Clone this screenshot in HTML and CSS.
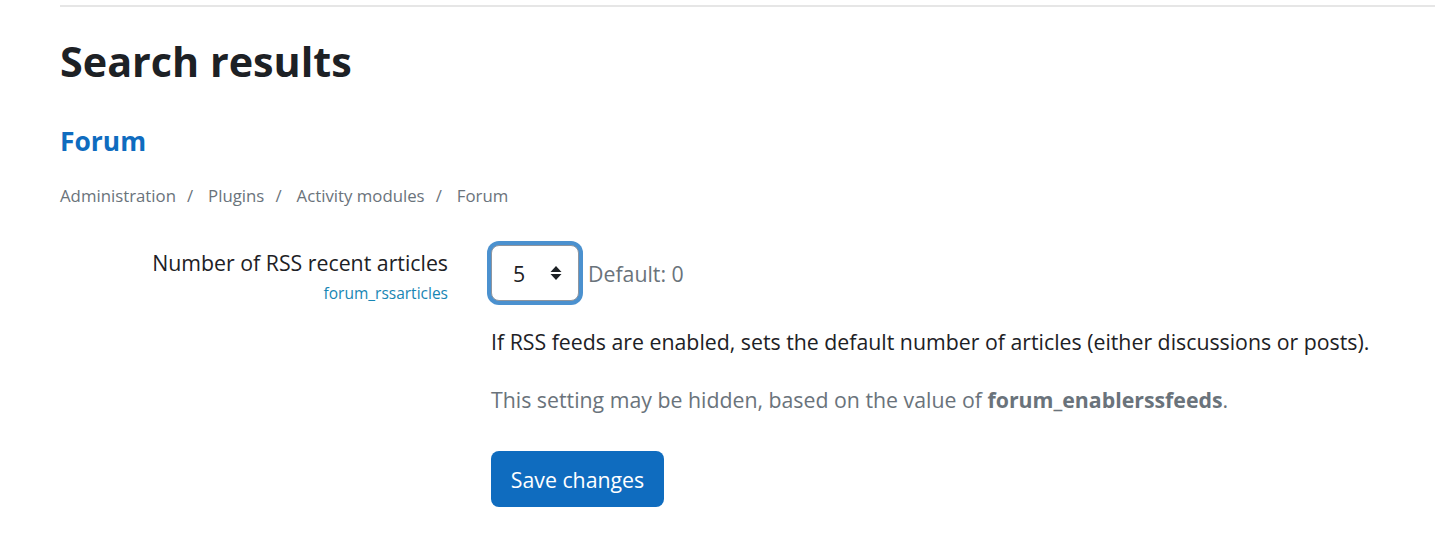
FILE: index.html
```html
<!DOCTYPE html>
<html>
    <head>
        <meta charset="UTF-8">
        <meta name="viewport" content="width=device-width, initial-scale=1">
        <title>Search results</title>
        <link rel="stylesheet" href="styles.css">
    </head>
    <body>
        <div class="page">
            <div class="topline"></div>

            <h2 class="page-title">Search results</h2>

            <h3 class="section-title">Forum</h3>

            <ol class="breadcrumb">
                <li>Administration</li>
                <li>Plugins</li>
                <li>Activity modules</li>
                <li>Forum</li>
            </ol>

            <form class="setting">
                <div class="setting-label">
                    <label for="id_s_forum_rssarticles">Number of RSS recent articles</label>
                    <span class="shortname">forum_rssarticles</span>
                </div>
                <div class="setting-body">
                    <div class="control">
                        <span class="select-wrap">
                            <select id="id_s_forum_rssarticles" class="select">
                                <option>0</option>
                                <option>1</option>
                                <option>2</option>
                                <option>3</option>
                                <option>4</option>
                                <option selected>5</option>
                            </select>
                            <svg class="select-arrows" width="12" height="16" viewBox="0 0 12 16">
                                <path d="M6 1 L11.5 7 H0.5 Z" fill="#1d2125"/>
                                <path d="M6 15 L11.5 9 H0.5 Z" fill="#1d2125"/>
                            </svg>
                        </span>
                        <span class="default">Default: 0</span>
                    </div>
                    <p class="description">If RSS feeds are enabled, sets the default number of articles (either discussions or posts).</p>
                    <p class="dependency">This setting may be hidden, based on the value of <strong>forum_enablerssfeeds</strong>.</p>
                    <button type="button" class="button">Save changes</button>
                </div>
            </form>
        </div>
    </body>
</html>
```

FILE: styles.css
```css
html, body {
    margin: 0;
    padding: 0;
    font-family: "Open Sans", "Noto Sans", sans-serif;
    color: #1d2125;
    background: #fff;
}
.page {
    padding-left: 60px;
}
.topline {
    height: 0;
    margin-top: 5px;
    border-top: 2px solid #e6e6e6;
}
.page-title {
    margin: 30px 0 0 0;
    font-size: 41.3px;
    font-weight: 700;
    line-height: 1.2;
}
.section-title {
    margin: 39px 0 0 0;
    font-size: 26.4px;
    font-weight: 700;
    line-height: 1.2;
    color: #0f6cbf;
}
.breadcrumb {
    display: flex;
    list-style: none;
    margin: 26px 0 0 0;
    padding: 0;
    font-size: 16.8px;
    line-height: 1.5;
    color: #6a737b;
}
.breadcrumb li + li::before {
    content: "/";
    padding: 0 15px 0 11px;
}
.setting {
    display: grid;
    grid-template-columns: 388px 1fr;
    column-gap: 43px;
    margin-top: 37px;
}
.setting-label {
    display: flex;
    flex-direction: column;
    align-items: flex-end;
    padding-top: 2px;
    font-size: 21.3px;
    line-height: 1.5;
}
.shortname {
    margin-top: 3px;
    font-size: 15.5px;
    color: #1786b4;
}
.control {
    display: flex;
    align-items: center;
}
.select-wrap {
    position: relative;
    display: inline-block;
}
.select {
    appearance: none;
    -webkit-appearance: none;
    width: 88px;
    height: 56px;
    box-sizing: border-box;
    padding: 0 0 0 21px;
    border: 1px solid #8f959e;
    border-radius: 8px;
    box-shadow: 0 0 0 4px rgba(15, 108, 191, .75);
    background: #fff;
    font-family: "Open Sans", "Noto Sans", sans-serif;
    font-size: 21.3px;
    color: #1d2125;
    outline: none;
}
.select-arrows {
    position: absolute;
    right: 17px;
    top: 20px;
    pointer-events: none;
}
.default {
    margin-left: 9px;
    font-size: 21.3px;
    color: #6a737b;
}
.description {
    margin: 25px 0 0 0;
    font-size: 21.3px;
    line-height: 1.5;
}
.dependency {
    margin: 26px 0 0 0;
    font-size: 21.3px;
    line-height: 1.5;
    color: #6a737b;
}
.button {
    margin-top: 35px;
    width: 173px;
    height: 56px;
    border: none;
    border-radius: 8px;
    background: #0f6cbf;
    color: #fff;
    font-family: "Open Sans", "Noto Sans", sans-serif;
    font-size: 21.3px;
}
```
